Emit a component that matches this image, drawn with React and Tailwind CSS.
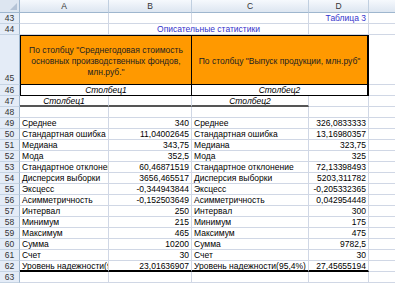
const GRID = "border-r border-b border-[#d0d7e5]";

const stats = [
  ["Среднее", "340", "326,0833333"],
  ["Стандартная ошибка", "11,04002645", "13,16980357"],
  ["Медиана", "343,75", "323,75"],
  ["Мода", "352,5", "325"],
  ["Стандартное отклонение", "60,46871519", "72,13398493"],
  ["Дисперсия выборки", "3656,465517", "5203,311782"],
  ["Эксцесс", "-0,344943844", "-0,205332365"],
  ["Асимметричность", "-0,152503649", "0,042954448"],
  ["Интервал", "250", "300"],
  ["Минимум", "215", "175"],
  ["Максимум", "465", "475"],
  ["Сумма", "10200", "9782,5"],
  ["Счет", "30", "30"],
  ["Уровень надежности(95,4%)", "23,01636907", "27,45655194"],
];

function RowNum({ n, tall }) {
  return (
    <div
      className={`flex justify-center border-r border-b border-r-[#9eb6ce] border-b-[#c5d3e3] bg-[#e4ecf7] text-[8.5px] leading-[11px] text-[#333] ${
        tall ? "items-end" : "items-center"
      }`}
    >
      {n}
    </div>
  );
}

function Cell({ className = "", children }) {
  return (
    <div
      className={`overflow-hidden whitespace-nowrap px-[2px] leading-[11px] ${className}`}
    >
      {children}
    </div>
  );
}

function ColHead({ label, last }) {
  return (
    <div
      className={`flex items-center justify-center border-b border-b-[#9eb6ce] bg-gradient-to-b from-[#f6f9fd] to-[#dde6f1] text-[8.5px] text-[#333] ${
        last ? "" : "border-r border-r-[#c0cfe0]"
      }`}
    >
      {label}
    </div>
  );
}

export default function App() {
  return (
    <div
      className="h-[286px] w-[395px] overflow-hidden bg-white text-[8.5px] text-black"
      style={{ fontFamily: '"Liberation Sans", Arial, sans-serif' }}
    >
      <div className="grid grid-cols-[20px_89px_83px_117px_60px_1fr] grid-rows-[13px_11px_11px_50px_11px_11px_repeat(17,11px)]">
        {/* header */}
        <div className="relative border-r border-b border-r-[#9eb6ce] border-b-[#9eb6ce] bg-[#dde6f1]">
          <div className="absolute bottom-[2px] right-[2px] h-0 w-0 border-b-[7px] border-l-[7px] border-b-[#b4c3d6] border-l-transparent" />
        </div>
        <ColHead label="A" />
        <ColHead label="B" />
        <ColHead label="C" />
        <ColHead label="D" />
        <ColHead label="" last />

        {/* 43 */}
        <RowNum n="43" />
        <Cell className={GRID} />
        <Cell className={GRID} />
        <Cell className={GRID} />
        <Cell className={`${GRID} text-right text-[#3333cc]`}>Таблица 3</Cell>
        <Cell className="border-b border-[#d0d7e5]" />

        {/* 44 */}
        <RowNum n="44" />
        <Cell className={GRID} />
        <Cell className={`${GRID} col-span-2 text-center text-[#3333cc]`}>
          Описательные статистики
        </Cell>
        <Cell className={GRID} />
        <Cell className="border-b border-[#d0d7e5]" />

        {/* 45 */}
        <RowNum n="45" tall />
        <div className="col-span-2 flex items-center justify-center border border-black bg-[#ff9900] px-1 pt-[2px] text-center text-[8.5px] leading-[11px] text-[#222]">
          По столбцу "Среднегодовая стоимость основных производственных фондов, млн.руб."
        </div>
        <div className="col-span-2 flex items-center justify-center border-y border-r-2 border-black bg-[#ff9900] pt-[2px] text-center text-[8.5px] leading-[11px] text-[#222]">
          По столбцу "Выпуск продукции, млн.руб"
        </div>
        <Cell className="border-b border-[#d0d7e5]" />

        {/* 46 */}
        <RowNum n="46" />
        <Cell className="col-span-2 border-x border-b border-black text-center italic">
          Столбец1
        </Cell>
        <Cell className="col-span-2 border-b border-r-2 border-black text-center italic">
          Столбец2
        </Cell>
        <Cell className="border-b border-[#d0d7e5]" />

        {/* 47 */}
        <RowNum n="47" />
        <Cell className="border-b-2 border-r border-b-[#555] border-r-[#d0d7e5] text-center italic">
          Столбец1
        </Cell>
        <Cell className="border-b-2 border-r border-b-[#555] border-r-[#d0d7e5]" />
        <Cell className="border-b-2 border-r border-b-[#555] border-r-[#d0d7e5] text-center italic">
          Столбец2
        </Cell>
        <Cell className={GRID} />
        <Cell className="border-b border-[#d0d7e5]" />

        {/* 48 */}
        <RowNum n="48" />
        <Cell className={GRID} />
        <Cell className={GRID} />
        <Cell className={GRID} />
        <Cell className={GRID} />
        <Cell className="border-b border-[#d0d7e5]" />

        {stats.map(([label, a, b], i) => {
          const last = i === stats.length - 1;
          const cls = last
            ? "border-b-2 border-r border-b-black border-r-[#d0d7e5]"
            : GRID;
          return [
            <RowNum key={`n${i}`} n={String(49 + i)} />,
            <Cell key={`a${i}`} className={cls}>
              {label}
            </Cell>,
            <Cell key={`b${i}`} className={`${cls} text-right`}>
              {a}
            </Cell>,
            <Cell key={`c${i}`} className={cls}>
              {label}
            </Cell>,
            <Cell key={`d${i}`} className={`${cls} text-right`}>
              {b}
            </Cell>,
            <Cell key={`e${i}`} className="border-b border-[#d0d7e5]" />,
          ];
        })}

        {/* 63 */}
        <RowNum n="63" />
        <Cell className={GRID} />
        <Cell className={GRID} />
        <Cell className={GRID} />
        <Cell className={GRID} />
        <Cell className="border-b border-[#d0d7e5]" />
      </div>
    </div>
  );
}
